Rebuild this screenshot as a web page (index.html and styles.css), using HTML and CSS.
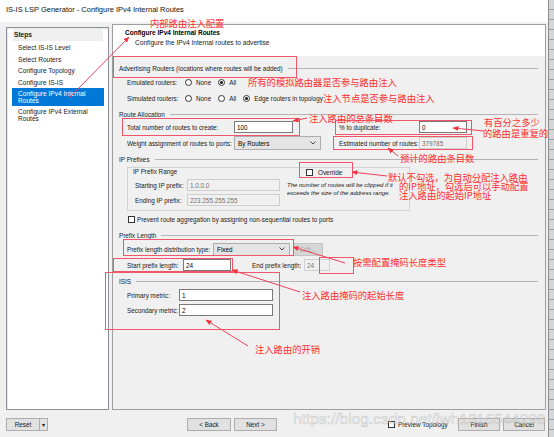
FILE: index.html
```html
<!DOCTYPE html>
<html>
<head>
<meta charset="utf-8">
<title>IS-IS LSP Generator</title>
<link rel="stylesheet" href="styles.css">
</head>
<body>
<div class="screen">
  <div class="window">
    <div class="titlebar">IS-IS LSP Generator - Configure IPv4 Internal Routes</div>
    <div class="main">
      <div class="steps">
        <div class="steps-head">Steps</div>
        <div class="step first">Select IS-IS Level</div>
        <div class="step">Select Routers</div>
        <div class="step">Configure Topology</div>
        <div class="step">Configure IS-IS</div>
        <div class="step two active">Configure IPv4 Internal<br>Routes</div>
        <div class="step two">Configure IPv4 External<br>Routes</div>
      </div>
      <div class="content">
        <div class="content-head">
          <div class="ch-title">Configure IPv4 Internal Routes</div>
          <div class="ch-sub">Configure the IPv4 Internal routes to advertise</div>
        </div>
        <div class="content-body">
          <div class="ghead g-adv"><span>Advertising Routers (locations where routes will be added)</span><i class="rule"></i></div>
          <div class="row r-emu">
            <span class="lbl w57">Emulated routers:</span>
            <span class="opt"><i class="radio"></i>None</span>
            <span class="opt"><i class="radio on"></i>All</span>
          </div>
          <div class="row r-sim">
            <span class="lbl w57">Simulated routers:</span>
            <span class="opt"><i class="radio"></i>None</span>
            <span class="opt"><i class="radio"></i>All</span>
            <span class="opt"><i class="radio on"></i>Edge routers in topology</span>
          </div>

          <div class="ghead g-ra"><span>Route Allocation</span><i class="rule"></i></div>
          <div class="alloc">
            <span class="lbl">Total number of routes to create:</span>
            <span class="input w59">100</span>
            <span></span>
            <span class="lbl">% to duplicate:</span>
            <span class="input w48">0</span>
            <span class="lbl">Weight assignment of routes to ports:</span>
            <span class="select w87">By Routers<svg class="chev" viewBox="0 0 6 4" width="6" height="4"><polyline points="0.5,0.5 3,3 5.5,0.5" fill="none" stroke="#333" stroke-width="0.9"/></svg></span>
            <span></span>
            <span class="lbl">Estimated number of routes:</span>
            <span class="input w48 disabled">379785</span>
          </div>

          <div class="ghead g-ip"><span>IP Prefixes</span><i class="rule"></i></div>
          <div class="groupbox">
            <div class="gb-left">
              <div class="legend">IP Prefix Range</div>
              <div class="gb-row first">
                <span class="lbl w52">Starting IP prefix:</span>
                <span class="input w93 disabled">1.0.0.0</span>
              </div>
              <div class="gb-row">
                <span class="lbl w52">Ending IP prefix:</span>
                <span class="input w93 disabled">223.255.255.255</span>
              </div>
            </div>
            <div class="gb-right">
              <div class="override"><i class="check"></i>Override</div>
              <div class="hint">The number of routes will be clipped if it<br>exceeds the size of the address range.</div>
            </div>
          </div>
          <div class="row r-prevent"><i class="check"></i>Prevent route aggregation by assigning non-sequential routes to ports</div>

          <div class="ghead g-pl"><span>Prefix Length</span><i class="rule"></i></div>
          <div class="row r-dist">
            <span class="lbl w86">Prefix length distribution type:</span>
            <span class="select w77">Fixed<svg class="chev" viewBox="0 0 6 4" width="6" height="4"><polyline points="0.5,0.5 3,3 5.5,0.5" fill="none" stroke="#333" stroke-width="0.9"/></svg></span>
            <span class="btn-edit">Edit...</span>
          </div>
          <div class="row r-start">
            <span class="lbl w56">Start prefix length:</span>
            <span class="input w48">24</span>
            <span class="lbl w52 end-lbl">End prefix length:</span>
            <span class="input w26 disabled">24</span>
          </div>

          <div class="ghead g-isis"><span>ISIS</span><i class="rule"></i></div>
          <div class="row r-pri">
            <span class="lbl w52">Primary metric:</span>
            <span class="input w94">1</span>
          </div>
          <div class="row r-sec">
            <span class="lbl w52">Secondary metric:</span>
            <span class="input w94">2</span>
          </div>
        </div>
      </div>
    </div>
    <div class="buttons">
      <div class="split"><span class="split-main">Reset</span><span class="split-arrow">▾</span></div>
      <span class="btn b-back">&lt; Back</span>
      <span class="btn b-next">Next &gt;</span>
      <span class="preview"><i class="check"></i>Preview Topology</span>
      <span class="btn b-finish">Finish</span>
      <span class="btn b-cancel">Cancel</span>
    </div>
  </div>
  <div class="desktop"></div>

  <div class="watermark">https://blog.csdn.net/lwh1316544298</div>

  <div class="annot">
    <svg class="annot-svg" width="554" height="437" viewBox="0 0 554 437">
      <defs>
        <marker id="ah" markerWidth="6" markerHeight="6" refX="5.5" refY="3" orient="auto" markerUnits="userSpaceOnUse">
          <path d="M0,0.5 L6,3 L0,5.5 z" fill="#f0303a"/>
        </marker>
      </defs>
      <g fill="none" stroke="#f0566a" stroke-width="1">
        <rect x="113.5" y="56.5" width="183" height="21"/>
        <rect x="122.5" y="118.5" width="177" height="17"/>
        <rect x="335.5" y="120.5" width="136" height="14"/>
        <rect x="333.5" y="136.5" width="139" height="13"/>
        <rect x="299.5" y="162.5" width="53" height="15"/>
        <rect x="123.5" y="239.5" width="170" height="16"/>
        <rect x="319.5" y="257.5" width="34" height="16"/>
        <rect x="113.5" y="258.5" width="119" height="13"/>
        <rect x="105.5" y="272.5" width="174" height="57"/>
      </g>
      <g stroke="#f0405a" stroke-width="1" fill="none" marker-end="url(#ah)">
        <line x1="70" y1="97" x2="129" y2="37"/>
        <line x1="307" y1="118" x2="293" y2="121"/>
        <line x1="484" y1="131" x2="453" y2="128"/>
        <line x1="398" y1="156" x2="388" y2="148"/>
        <line x1="387" y1="176" x2="352" y2="172"/>
        <line x1="345" y1="263" x2="293" y2="247"/>
        <line x1="300" y1="292" x2="232" y2="270"/>
        <line x1="248" y1="346" x2="206" y2="320"/>
      </g>
    </svg>
    <span class="note n-top">内部路由注入配置</span>
    <span class="note n-emu">所有的模拟路由器是否参与路由注入</span>
    <span class="note n-sim">注入节点是否参与路由注入</span>
    <span class="note n-total">注入路由的总条目数</span>
    <span class="note n-dup1">有百分之多少</span>
    <span class="note n-dup2">的路由是重复的</span>
    <span class="note n-est">预计的路由条目数</span>
    <span class="note n-ov1">默认不勾选，为自动分配注入路由</span>
    <span class="note n-ov2">的IP地址，勾选后可以手动配置</span>
    <span class="note n-ov3">注入路由的起始IP地址</span>
    <span class="note n-dist">按需配置掩码长度类型</span>
    <span class="note n-start">注入路由掩码的起始长度</span>
    <span class="note n-isis">注入路由的开销</span>
  </div>
</div>
</body>
</html>
```

FILE: styles.css
```css
* { box-sizing: border-box; margin: 0; padding: 0; }

body {
  margin: 0;
  background: #c6c9ce;
  font-family: "Liberation Sans", Arial, sans-serif;
  font-size: 6.35px;
  color: #1a1a1a;
}

.screen {
  position: relative;
  width: 554px;
  height: 437px;
  overflow: hidden;
  display: flex;
}

.window {
  width: 549px;
  height: 437px;
  background: #f0f0f0;
  border-right: 1px solid #8c8c8c;
  display: flex;
  flex-direction: column;
  flex: none;
}

.desktop {
  flex: 1;
  background: repeating-linear-gradient(180deg, #d4d6da 0 9px, #9aa0a8 9px 10px);
}

.titlebar {
  height: 22px;
  background: #fff;
  font-size: 7.5px;
  line-height: 20px;
  padding-left: 6px;
  color: #111;
  white-space: nowrap;
}

.main {
  display: flex;
  align-items: flex-start;
  gap: 3px;
  padding: 2px 0 0 6px;
  height: 388px;
}

/* Steps panel */
.steps {
  width: 103px;
  height: 383px;
  margin-top: 3px;
  background: #fff;
  border: 1px solid #8e9197;
  box-shadow: inset 1px 1px 0 #e6e6e6;
  padding: 1px 4px 0 5px;
  font-size: 6.6px;
}
.steps-head {
  height: 12px;
  margin: 0 1px;
  background: #efefef;
  font-weight: bold;
  line-height: 12px;
  padding-left: 1px;
}
.step {
  padding: 2px 0 2px 6px;
  line-height: 7.5px;
  white-space: nowrap;
}
.step.first { margin-top: 1px; }
.step.two { padding: 1.5px 0 1.5px 6px; }
.step.active { background: #0078d7; color: #fff; }

/* Content panel */
.content {
  width: 434px;
  height: 386px;
  border: 1px solid #9e9e9e;
  display: flex;
  flex-direction: column;
}
.content-head {
  height: 31px;
  background: #fff;
  padding: 4px 0 0 12px;
}
.ch-title {
  font-weight: bold;
  font-size: 6.5px;
  line-height: 8px;
  color: #000;
}
.ch-sub {
  margin: 2px 0 0 10px;
  line-height: 8px;
  font-size: 6.6px;
}
.content-body {
  padding: 0 7px 0 6px;
}

.ghead {
  display: flex;
  align-items: center;
  height: 12px;
  white-space: nowrap;
}
.ghead .rule {
  flex: 1;
  height: 0;
  border-top: 1px solid #b4b4b4;
  margin-left: 5px;
}
.g-adv { margin-top: 6px; }
.g-ra { margin-top: 4px; }
.g-ip { margin-top: 2px; }
.g-pl { margin-top: 4px; }
.g-isis { margin-top: 4px; }

.row {
  display: flex;
  align-items: center;
  height: 12px;
  padding-left: 8px;
  white-space: nowrap;
}
.r-emu { margin-top: 2px; }
.r-sim { margin-top: 4px; }
.r-prevent { margin-top: 2px; padding-left: 9px; }
.r-dist { margin-top: 1px; height: 14px; }
.r-start { margin-top: 3px; }
.r-pri { margin-top: 2px; }
.r-sec { margin-top: 3px; }

.lbl { white-space: nowrap; flex: none; }
.w57 { width: 57px; }
.w52 { width: 52px; }
.w56 { width: 56px; }
.w86 { width: 86px; }

.opt {
  display: inline-flex;
  align-items: center;
  margin-right: 6px;
}
.radio {
  width: 7px;
  height: 7px;
  border: 1px solid #333;
  border-radius: 50%;
  background: #fff;
  margin: 0 4px 0 1px;
  display: inline-flex;
  align-items: center;
  justify-content: center;
  flex: none;
}
.radio.on::after {
  content: "";
  width: 3px;
  height: 3px;
  border-radius: 50%;
  background: #111;
}
.check {
  width: 7px;
  height: 7px;
  border: 1px solid #333;
  background: #fff;
  margin-right: 2px;
  flex: none;
  display: inline-block;
}

.input {
  display: inline-flex;
  align-items: center;
  height: 12px;
  background: #fff;
  border: 1px solid #7a7a7a;
  padding-left: 2px;
  color: #000;
  flex: none;
}
.input.disabled {
  background: #f0f0f0;
  border-color: #cfcfcf;
  color: #707070;
}
.w59 { width: 59px; }
.w48 { width: 48px; }
.w93 { width: 93px; }
.w94 { width: 94px; }
.w26 { width: 26px; }

.select {
  display: inline-flex;
  align-items: center;
  justify-content: space-between;
  height: 14px;
  background: #e5e5e5;
  border: 1px solid #adadad;
  padding: 0 4px 0 3px;
  color: #000;
  flex: none;
}
.w87 { width: 87px; }
.w77 { width: 77px; height: 13px; }

.btn-edit {
  width: 30px;
  height: 13px;
  margin-left: 3px;
  background: #d6d6d6;
  border: 1px solid #c4c4c4;
  color: #a3a3a3;
  display: inline-flex;
  align-items: center;
  justify-content: center;
}
.end-lbl { margin-left: 21px; }

/* Route allocation grid */
.alloc {
  display: grid;
  grid-template-columns: 107px 87px 18px 80px 48px;
  grid-template-rows: 12px 16px;
  row-gap: 2px;
  align-items: center;
  margin-top: 1px;
  padding-left: 8px;
}

/* IP prefix group box */
.groupbox {
  display: flex;
  width: 283px;
  margin: 2px 0 0 8px;
  border: 1px solid #d4d4d4;
  padding: 0 0 4px 7px;
}
.gb-left { width: 152px; }
.legend {
  height: 8px;
  line-height: 8px;
  margin-left: -2px;
}
.gb-row {
  display: flex;
  align-items: center;
  height: 12px;
  margin-top: 3px;
}
.gb-right { flex: 1; }
.override {
  display: flex;
  align-items: center;
  height: 8px;
  padding-left: 19px;
}
.override .check { margin-right: 5px; }
.hint {
  margin-top: 5px;
  font-style: italic;
  font-size: 6px;
  line-height: 8px;
  white-space: nowrap;
}

/* Bottom buttons */
.buttons {
  display: flex;
  align-items: center;
  height: 13px;
  margin-top: 8px;
  padding: 0 3px 0 6px;
  white-space: nowrap;
}
.split {
  display: flex;
  width: 42px;
  height: 13px;
  border: 1px solid #adadad;
  background: #e1e1e1;
}
.split-main {
  width: 33px;
  display: flex;
  align-items: center;
  justify-content: center;
  border-right: 1px solid #adadad;
}
.split-arrow {
  flex: 1;
  display: flex;
  align-items: center;
  justify-content: center;
  font-size: 6px;
}
.btn {
  height: 13px;
  background: #e1e1e1;
  border: 1px solid #adadad;
  display: inline-flex;
  align-items: center;
  justify-content: center;
  flex: none;
}
.b-back { width: 44px; margin-left: 139px; }
.b-next { width: 43px; margin-left: 3px; }
.preview {
  display: inline-flex;
  align-items: center;
  margin-left: 111px;
}
.preview .check { margin-right: 3px; }
.b-finish { width: 42px; margin-left: auto; }
.b-cancel { width: 42px; margin-left: 3px; }

/* Watermark overlay */
.watermark {
  position: absolute;
  left: 293px;
  top: 410px;
  font-family: "Liberation Sans", Arial, sans-serif;
  font-size: 15.5px;
  line-height: 18px;
  color: rgba(255, 255, 255, 0.4);
  -webkit-text-stroke: 0.6px rgba(150, 150, 150, 0.45);
  white-space: nowrap;
  pointer-events: none;
}

/* Annotations overlay */
.annot {
  position: absolute;
  inset: 0;
  pointer-events: none;
}
.annot-svg {
  position: absolute;
  left: 0;
  top: 0;
}
.note {
  position: absolute;
  font-family: "Noto Sans CJK SC", "Noto Sans", sans-serif;
  font-size: 9.3px;
  line-height: 10px;
  color: #ff2f2f;
  white-space: nowrap;
}
.n-top { left: 150px; top: 18px; }
.n-emu { left: 248px; top: 77px; }
.n-sim { left: 323px; top: 93px; }
.n-total { left: 309px; top: 113px; }
.n-dup1 { left: 484px; top: 117px; }
.n-dup2 { left: 483px; top: 128px; }
.n-est { left: 400px; top: 153px; }
.n-ov1 { left: 388px; top: 172px; }
.n-ov2 { left: 399px; top: 181px; }
.n-ov3 { left: 399px; top: 190px; }
.n-dist { left: 353px; top: 257px; }
.n-start { left: 302px; top: 290px; }
.n-isis { left: 255px; top: 344px; }
```
